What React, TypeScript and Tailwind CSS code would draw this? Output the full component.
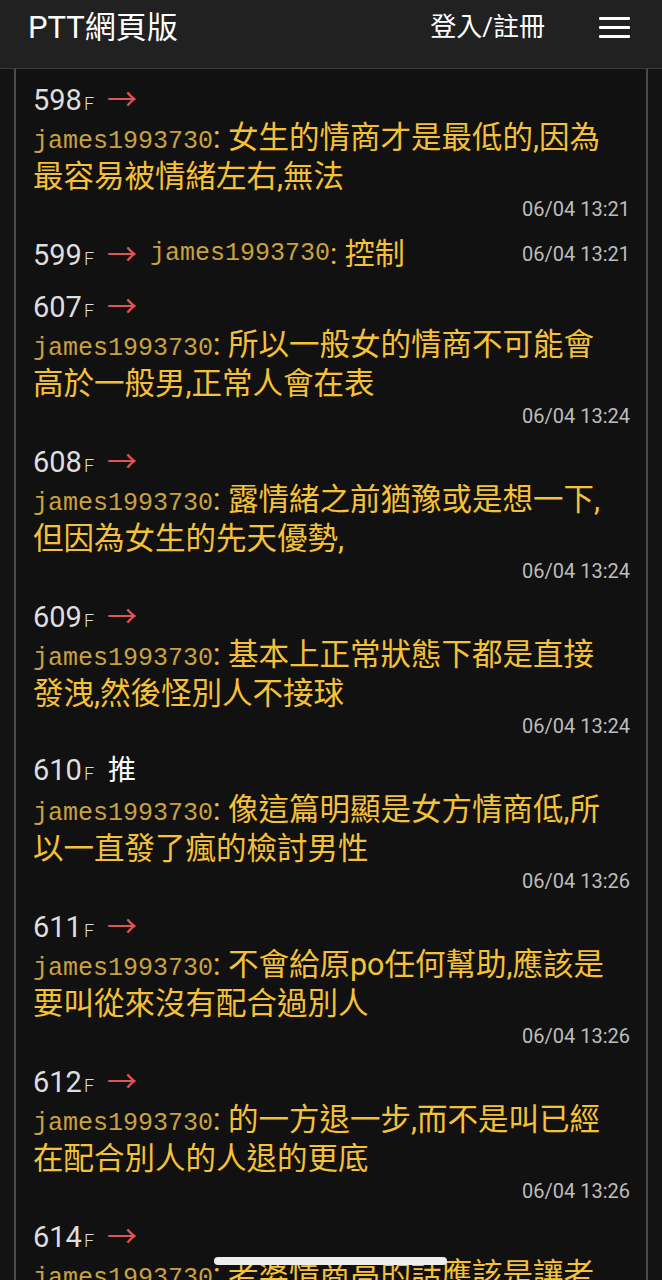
type Push = {
  floor: string;
  tag: "→" | "推";
  user: string;
  text: string;
  time: string;
  inline?: boolean;
};

const pushes: Push[] = [
  { floor: "598", tag: "→", user: "james1993730", text: "女生的情商才是最低的,因為最容易被情緒左右,無法", time: "06/04 13:21" },
  { floor: "599", tag: "→", user: "james1993730", text: "控制", time: "06/04 13:21", inline: true },
  { floor: "607", tag: "→", user: "james1993730", text: "所以一般女的情商不可能會高於一般男,正常人會在表", time: "06/04 13:24" },
  { floor: "608", tag: "→", user: "james1993730", text: "露情緒之前猶豫或是想一下,但因為女生的先天優勢,", time: "06/04 13:24" },
  { floor: "609", tag: "→", user: "james1993730", text: "基本上正常狀態下都是直接發洩,然後怪別人不接球", time: "06/04 13:24" },
  { floor: "610", tag: "推", user: "james1993730", text: "像這篇明顯是女方情商低,所以一直發了瘋的檢討男性", time: "06/04 13:26" },
  { floor: "611", tag: "→", user: "james1993730", text: "不會給原po任何幫助,應該是要叫從來沒有配合過別人", time: "06/04 13:26" },
  { floor: "612", tag: "→", user: "james1993730", text: "的一方退一步,而不是叫已經在配合別人的人退的更底", time: "06/04 13:26" },
  { floor: "614", tag: "→", user: "james1993730", text: "老婆情商高的話應該是讓老公有台階下,而不是一直逼", time: "06/04 13:27" },
];

const sans = "font-['Roboto','Noto_Sans_CJK_TC',sans-serif]";

function FloorTag({ p }: { p: Push }) {
  return (
    <div className="flex items-baseline">
      <span className="text-[29px] leading-none text-[#dedede]">{p.floor}</span>
      <span className="ml-[2px] text-[18px] font-light leading-none text-[#dedede]">F</span>
      {p.tag === "→" ? (
        <span className="ml-[13px] font-['Noto_Sans_CJK_TC',sans-serif] text-[30px] leading-none text-[#e25555]">→</span>
      ) : (
        <span className="ml-[14px] text-[28px] leading-none text-white">推</span>
      )}
    </div>
  );
}

function Row({ p }: { p: Push }) {
  if (p.inline) {
    return (
      <div className="mb-[13px] flex h-[39px] items-center">
        <FloorTag p={p} />
        <span className="ml-[13px] font-['Liberation_Mono',monospace] text-[25px] leading-none text-[#c9a23f]">{p.user}</span>
        <span className="text-[30px] leading-none text-[#f5c137]">: {p.text}</span>
        <span className="ml-auto text-[20px] leading-none text-[#bdbdbd]">{p.time}</span>
      </div>
    );
  }
  return (
    <div className="mb-[13px]">
      <div className="flex h-[39px] items-center">
        <FloorTag p={p} />
      </div>
      <p className="pr-[14px] text-[30.5px] leading-[39px] text-[#f5c137]">
        <span className="font-['Liberation_Mono',monospace] text-[25px] leading-none text-[#c9a23f]">{p.user}</span>
        : {p.text}
      </p>
      <div className="flex h-[25px] items-center justify-end text-[20px] leading-none text-[#bdbdbd]">{p.time}</div>
    </div>
  );
}

export default function App() {
  return (
    <div className={`relative h-[1280px] w-full overflow-hidden bg-[#131313] ${sans}`}>
      {/* header */}
      <header className="flex h-[69px] items-center border-b border-[#3a3a3a] bg-[#212121] pb-[14px] pl-[28px] pr-[32px]">
        <h1 className="text-[31px] leading-none text-white">PTT網頁版</h1>
        <span className="ml-auto text-[26px] leading-none text-white">登入/註冊</span>
        <button className="ml-[54px] flex w-[31px] flex-col gap-[6px]">
          <span className="h-[3px] w-full rounded-[1px] bg-white" />
          <span className="h-[3px] w-full rounded-[1px] bg-white" />
          <span className="h-[3px] w-full rounded-[1px] bg-white" />
        </button>
      </header>

      {/* pushes */}
      <div className="mx-[14px] border-x-2 border-[#4a4a4a] bg-[#111111] pl-[17px] pr-[16px] pt-[10px]">
        {pushes.map((p) => (
          <Row key={p.floor} p={p} />
        ))}
      </div>

      {/* home indicator */}
      <div className="absolute bottom-[15px] left-[214px] h-[8px] w-[233px] rounded-full bg-[#eeeeee]" />
    </div>
  );
}
